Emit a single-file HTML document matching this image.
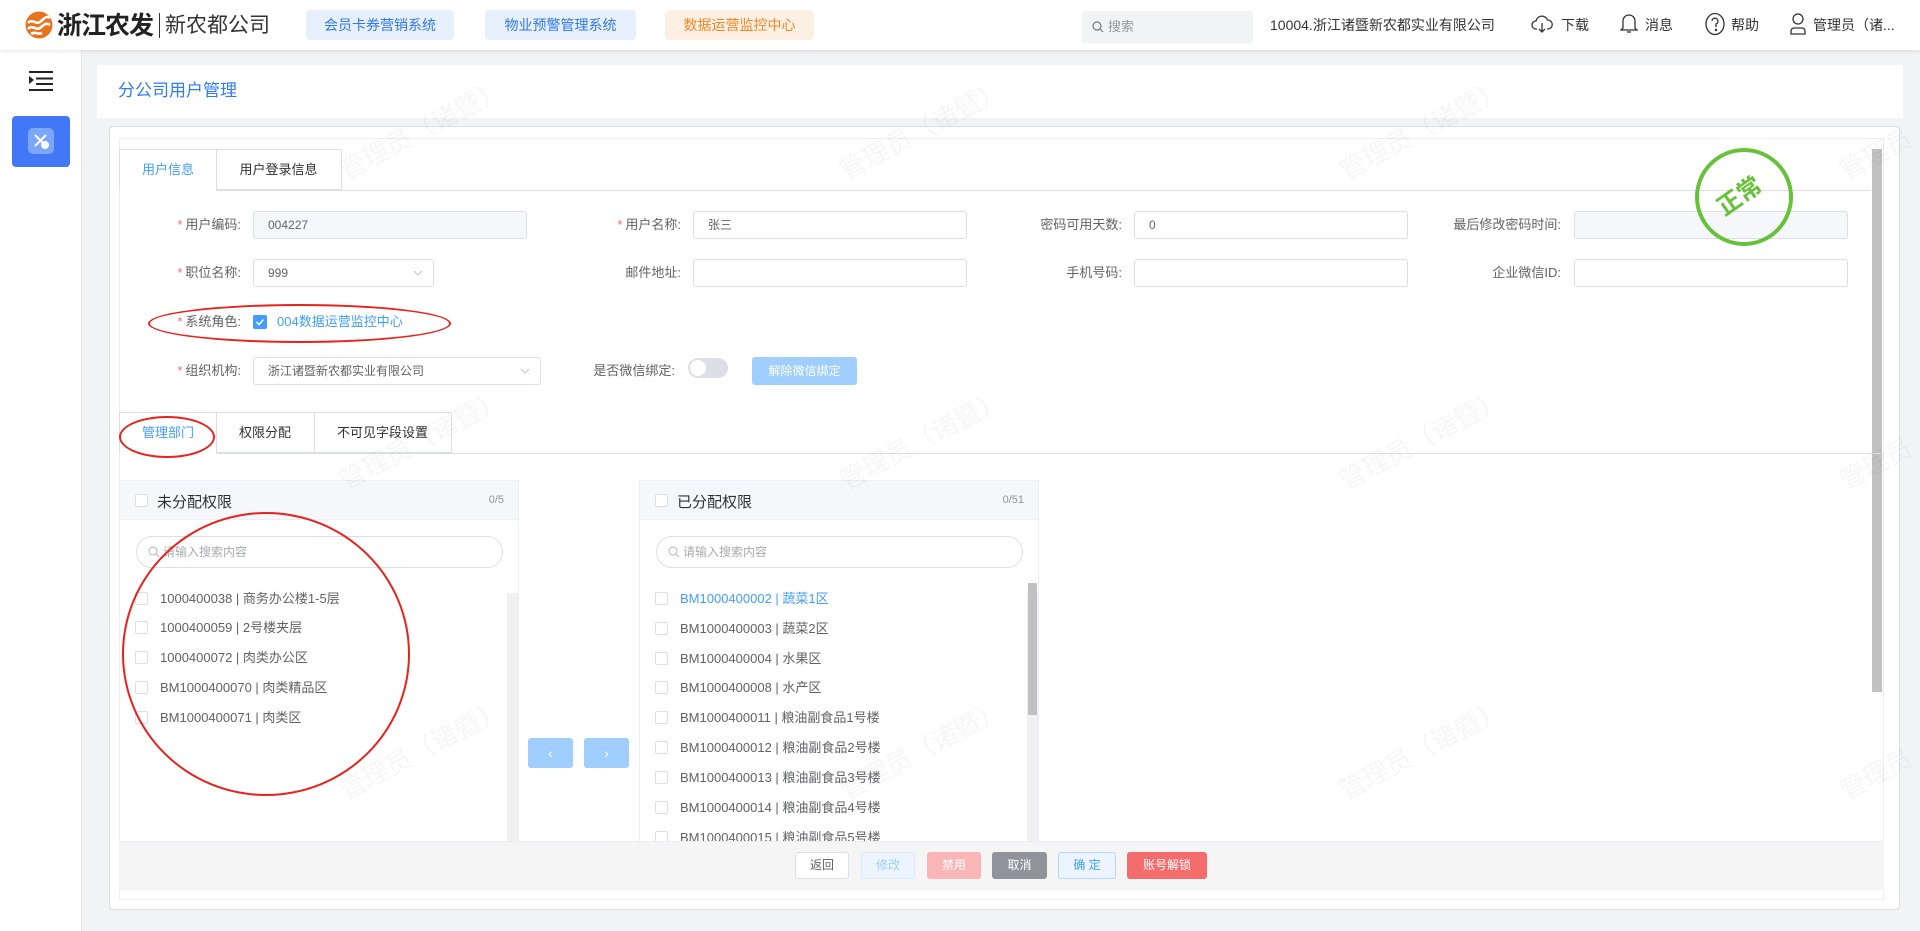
<!DOCTYPE html>
<html><head><meta charset="utf-8"><style>
*{box-sizing:border-box;margin:0;padding:0}
body{width:1920px;height:931px;overflow:hidden;background:#f2f3f5;font-family:"Liberation Sans","Noto Sans CJK SC",sans-serif;color:#606266;position:relative;font-size:13px}
.a{position:absolute}
.hdr{left:0;top:0;width:1920px;height:50px;background:#fff;box-shadow:0 2px 4px rgba(0,0,0,.08);z-index:5}
.tab{height:30px;top:10px;border-radius:4px;font-size:14px;line-height:30px;text-align:center}
.side{left:0;top:50px;width:82px;height:881px;background:#fff;border-right:1px solid #e6e6e6}
.inp{height:28px;border:1px solid #dcdfe6;border-radius:3px;background:#fff;font-size:12px;line-height:26px;padding-left:14px;color:#606266}
.lbl{font-size:13px;color:#606266;text-align:right;line-height:28px}
.req{color:#f56c6c;margin-right:3px}
.cb{width:13px;height:13px;border:1px solid #dcdfe6;border-radius:2px;background:#fff}
.item{font-size:13px;color:#606266;line-height:16px}
.wm{font-size:26px;color:rgba(0,0,0,.035);transform:rotate(-28deg);white-space:nowrap;z-index:3;pointer-events:none}
.btn{top:852px;height:27px;border-radius:3px;font-size:12px;line-height:25px;text-align:center}
</style></head><body>
<div class="a hdr">
 <svg class="a" style="left:25px;top:11px" width="28" height="28" viewBox="0 0 28 28"><circle cx="14" cy="14" r="13.5" fill="#e8731e"/><path d="M3 12c4-5 8 2 12-1s6-7 10-4M3 18c4-5 8 2 12-1s6-6 10-3M6 23c4-3 7 1 11-1" stroke="#fff" stroke-width="2.6" fill="none"/></svg>
 <div class="a" style="left:57px;top:10px;font-size:25px;font-weight:bold;color:#222;line-height:32px;letter-spacing:-1px">浙江农发</div>
 <div class="a" style="left:159px;top:13px;width:1px;height:25px;background:#333"></div>
 <div class="a" style="left:165px;top:12px;font-size:21px;color:#333;line-height:28px">新农都公司</div>
 <div class="a tab" style="left:306px;width:148px;background:#e5f0fc;color:#3477e6">会员卡券营销系统</div>
 <div class="a tab" style="left:485px;width:151px;background:#e5f0fc;color:#3477e6">物业预警管理系统</div>
 <div class="a tab" style="left:665px;width:149px;background:#fdf0e3;color:#f0882a">数据运营监控中心</div>
 <div class="a" style="left:1082px;top:11px;width:171px;height:32px;background:#f2f3f5;border-radius:3px;font-size:13px;color:#999;line-height:32px;padding-left:26px">搜索
  <svg class="a" style="left:10px;top:10px" width="12" height="12" viewBox="0 0 12 12"><circle cx="5" cy="5" r="4" stroke="#777" fill="none" stroke-width="1.2"/><path d="M8 8l3 3" stroke="#777" stroke-width="1.2"/></svg></div>
 <div class="a" style="left:1270px;top:16px;font-size:14px;color:#333;line-height:18px">10004.浙江诸暨新农都实业有限公司</div>
 <svg class="a" style="left:1531px;top:13px" width="22" height="22" viewBox="0 0 22 22" fill="none" stroke="#333" stroke-width="1.3"><path d="M6 16H5a4 4 0 0 1 0-8 6 6 0 0 1 11.5-1A4.5 4.5 0 0 1 17 16h-1"/><path d="M11 10v9M8 16l3 3 3-3"/></svg>
 <div class="a" style="left:1561px;top:15px;font-size:14px;color:#333">下载</div>
 <svg class="a" style="left:1620px;top:12px" width="18" height="22" viewBox="0 0 18 22" fill="none" stroke="#333" stroke-width="1.3"><path d="M3 16V9a6 6 0 0 1 12 0v7l2 2H1z"/><path d="M7 20h4"/></svg>
 <div class="a" style="left:1645px;top:15px;font-size:14px;color:#333">消息</div>
 <svg class="a" style="left:1704px;top:12px" width="22" height="24" viewBox="0 0 22 24" fill="none" stroke="#333" stroke-width="1.3"><ellipse cx="11" cy="12" rx="9" ry="10.5"/><path d="M8 9a3 3 0 1 1 4 3v3"/><circle cx="12" cy="18" r=".6" fill="#333"/></svg>
 <div class="a" style="left:1731px;top:15px;font-size:14px;color:#333">帮助</div>
 <svg class="a" style="left:1789px;top:12px" width="18" height="24" viewBox="0 0 18 24" fill="none" stroke="#333" stroke-width="1.3"><circle cx="9" cy="7" r="5"/><path d="M2 22v-3a3 3 0 0 1 3-3h8a3 3 0 0 1 3 3v3z"/></svg>
 <div class="a" style="left:1813px;top:15px;font-size:14px;color:#333">管理员（诸...</div>
</div>
<div class="a side">
 <svg class="a" style="left:29px;top:21px" width="24" height="20" viewBox="0 0 24 20"><path d="M0 1h24M7 7.5h17M7 13h17M0 19h24" stroke="#222" stroke-width="2"/><path d="M0 5l5 4-5 4z" fill="#222"/></svg>
 <div class="a" style="left:12px;top:66px;width:58px;height:51px;background:#4277f8;border-radius:4px"></div>
 <div class="a" style="left:28px;top:78px;width:26px;height:26px;background:#7aa6fb;border-radius:5px"></div>
 <svg class="a" style="left:31px;top:81px" width="20" height="20" viewBox="0 0 20 20" fill="none" stroke="#fff" stroke-width="2"><path d="M4 4l11 11M15 4L4 15"/><circle cx="14" cy="14" r="3" fill="#fff"/></svg>
</div>
<div class="a" style="left:97px;top:65px;width:1806px;height:53px;background:#fff"></div>
<div class="a" style="left:118px;top:80px;font-size:17px;color:#2f7cf5;line-height:22px">分公司用户管理</div>
<div class="a" style="left:109px;top:126px;width:1791px;height:784px;background:#fff;border:1px solid #dcdfe6;border-radius:4px"></div>
<div class="a" style="left:119px;top:138px;width:1765px;height:762px;border:1px solid #ebeef5;background:#fff"></div>
<div class="a" style="left:119px;top:149px;width:1752px;height:42px;border-bottom:1px solid #dcdfe6"></div>
<div class="a" style="left:119px;top:149px;width:98px;height:42px;border:1px solid #dcdfe6;border-bottom:1px solid #fff;background:#fff;color:#409eff;font-size:13px;line-height:40px;text-align:center">用户信息</div>
<div class="a" style="left:216px;top:149px;width:126px;height:41px;border:1px solid #dcdfe6;border-left:none;color:#303133;font-size:13px;line-height:40px;text-align:center">用户登录信息</div>
<div class="a" style="left:1872px;top:149px;width:10px;height:543px;background:#c1c1c1"></div>
<div class="a lbl" style="left:140px;top:211px;width:101px"><span class="req">*</span>用户编码:</div>
<div class="a inp" style="left:253px;top:211px;width:274px;background:#f5f7fa">004227</div>
<div class="a lbl" style="left:580px;top:211px;width:101px"><span class="req">*</span>用户名称:</div>
<div class="a inp" style="left:693px;top:211px;width:274px">张三</div>
<div class="a lbl" style="left:1000px;top:211px;width:122px">密码可用天数:</div>
<div class="a inp" style="left:1134px;top:211px;width:274px">0</div>
<div class="a lbl" style="left:1420px;top:211px;width:141px">最后修改密码时间:</div>
<div class="a inp" style="left:1574px;top:211px;width:274px;background:#f5f7fa"></div>
<div class="a lbl" style="left:140px;top:259px;width:101px"><span class="req">*</span>职位名称:</div>
<div class="a inp" style="left:253px;top:259px;width:181px">999<svg class="a" style="right:10px;top:10px" width="10" height="6"><path d="M1 1l4 4 4-4" stroke="#c0c4cc" fill="none"/></svg></div>
<div class="a lbl" style="left:580px;top:259px;width:101px">邮件地址:</div>
<div class="a inp" style="left:693px;top:259px;width:274px"></div>
<div class="a lbl" style="left:1000px;top:259px;width:122px">手机号码:</div>
<div class="a inp" style="left:1134px;top:259px;width:274px"></div>
<div class="a lbl" style="left:1420px;top:259px;width:141px">企业微信ID:</div>
<div class="a inp" style="left:1574px;top:259px;width:274px"></div>
<div class="a lbl" style="left:140px;top:308px;width:101px"><span class="req">*</span>系统角色:</div>
<div class="a" style="left:253px;top:315px;width:14px;height:14px;background:#409eff;border-radius:2px"><svg width="14" height="14"><path d="M3.5 7l2.5 2.5 4.5-5" stroke="#fff" stroke-width="1.5" fill="none"/></svg></div>
<div class="a" style="left:277px;top:313px;font-size:13px;color:#409eff;line-height:18px">004数据运营监控中心</div>
<div class="a" style="left:148px;top:304px;width:303px;height:39px;border:2px solid #e8221c;border-radius:50%"></div>
<div class="a lbl" style="left:140px;top:357px;width:101px"><span class="req">*</span>组织机构:</div>
<div class="a inp" style="left:253px;top:357px;width:288px">浙江诸暨新农都实业有限公司<svg class="a" style="right:10px;top:10px" width="10" height="6"><path d="M1 1l4 4 4-4" stroke="#c0c4cc" fill="none"/></svg></div>
<div class="a lbl" style="left:560px;top:357px;width:115px">是否微信绑定:</div>
<div class="a" style="left:688px;top:358px;width:40px;height:20px;border-radius:10px;background:#dcdfe6"><div class="a" style="left:2px;top:2px;width:16px;height:16px;border-radius:50%;background:#fff"></div></div>
<div class="a" style="left:752px;top:357px;width:105px;height:28px;background:#a0cfff;border-radius:3px;color:#fff;font-size:12px;line-height:28px;text-align:center">解除微信绑定</div>
<div class="a" style="left:119px;top:412px;width:1765px;height:42px;border-bottom:1px solid #dcdfe6"></div>
<div class="a" style="left:119px;top:412px;width:98px;height:42px;border:1px solid #dcdfe6;border-bottom:1px solid #fff;background:#fff;color:#409eff;font-size:13px;line-height:40px;text-align:center">管理部门</div>
<div class="a" style="left:216px;top:412px;width:99px;height:41px;border:1px solid #dcdfe6;border-left:none;color:#303133;font-size:13px;line-height:40px;text-align:center">权限分配</div>
<div class="a" style="left:314px;top:412px;width:138px;height:41px;border:1px solid #dcdfe6;border-left:none;color:#303133;font-size:13px;line-height:40px;text-align:center">不可见字段设置</div>
<div class="a" style="left:119px;top:416px;width:96px;height:42px;border:2px solid #e8221c;border-radius:50%"></div>
<div class="a" style="left:119px;top:480px;width:400px;height:362px;border:1px solid #ebeef5;background:#fff">
 <div class="a" style="left:0;top:0;width:398px;height:39px;background:#f5f7fa;border-bottom:1px solid #ebeef5"></div>
 <div class="a cb" style="left:15px;top:13px"></div>
 <div class="a" style="left:37px;top:10px;font-size:15px;color:#303133">未分配权限</div>
 <div class="a" style="right:14px;top:13px;font-size:11px;color:#909399">0/5</div>
 <div class="a" style="left:16px;top:55px;width:367px;height:32px;border:1px solid #dcdfe6;border-radius:16px;font-size:12px;color:#a8abb2;line-height:30px;padding-left:26px">请输入搜索内容<svg class="a" style="left:11px;top:9px" width="12" height="12"><circle cx="5" cy="5" r="4" stroke="#b0b3b8" fill="none"/><path d="M8 8l3 3" stroke="#b0b3b8"/></svg></div>
 <div class="a" style="left:387px;top:112px;width:11px;height:250px;background:#f1f1f1"></div>
 <div class="a cb" style="left:15px;top:111px"></div><div class="a item" style="left:40px;top:110px">1000400038 | 商务办公楼1-5层</div>
 <div class="a cb" style="left:15px;top:140px"></div><div class="a item" style="left:40px;top:139px">1000400059 | 2号楼夹层</div>
 <div class="a cb" style="left:15px;top:170px"></div><div class="a item" style="left:40px;top:169px">1000400072 | 肉类办公区</div>
 <div class="a cb" style="left:15px;top:200px"></div><div class="a item" style="left:40px;top:199px">BM1000400070 | 肉类精品区</div>
 <div class="a cb" style="left:15px;top:230px"></div><div class="a item" style="left:40px;top:229px">BM1000400071 | 肉类区</div>
</div>
<div class="a" style="left:122px;top:512px;width:288px;height:284px;border:2px solid #e8221c;border-radius:50%"></div>
<div class="a" style="left:528px;top:738px;width:45px;height:30px;background:#a0cfff;border-radius:3px;color:#fff;text-align:center;line-height:30px;font-size:14px">‹</div>
<div class="a" style="left:584px;top:738px;width:45px;height:30px;background:#a0cfff;border-radius:3px;color:#fff;text-align:center;line-height:30px;font-size:14px">›</div>
<div class="a" style="left:639px;top:480px;width:400px;height:362px;border:1px solid #ebeef5;background:#fff;overflow:hidden">
 <div class="a" style="left:0;top:0;width:398px;height:39px;background:#f5f7fa;border-bottom:1px solid #ebeef5"></div>
 <div class="a cb" style="left:15px;top:13px"></div>
 <div class="a" style="left:37px;top:10px;font-size:15px;color:#303133">已分配权限</div>
 <div class="a" style="right:14px;top:13px;font-size:11px;color:#909399">0/51</div>
 <div class="a" style="left:16px;top:55px;width:367px;height:32px;border:1px solid #dcdfe6;border-radius:16px;font-size:12px;color:#a8abb2;line-height:30px;padding-left:26px">请输入搜索内容<svg class="a" style="left:11px;top:9px" width="12" height="12"><circle cx="5" cy="5" r="4" stroke="#b0b3b8" fill="none"/><path d="M8 8l3 3" stroke="#b0b3b8"/></svg></div>
 <div class="a" style="left:387px;top:112px;width:11px;height:250px;background:#f1f1f1"></div>
 <div class="a" style="left:388px;top:102px;width:9px;height:132px;background:#c1c1c1"></div>
 <div class="a cb" style="left:15px;top:111px"></div><div class="a item" style="left:40px;top:110px;color:#409eff">BM1000400002 | 蔬菜1区</div>
 <div class="a cb" style="left:15px;top:141px"></div><div class="a item" style="left:40px;top:140px">BM1000400003 | 蔬菜2区</div>
 <div class="a cb" style="left:15px;top:171px"></div><div class="a item" style="left:40px;top:170px">BM1000400004 | 水果区</div>
 <div class="a cb" style="left:15px;top:200px"></div><div class="a item" style="left:40px;top:199px">BM1000400008 | 水产区</div>
 <div class="a cb" style="left:15px;top:230px"></div><div class="a item" style="left:40px;top:229px">BM1000400011 | 粮油副食品1号楼</div>
 <div class="a cb" style="left:15px;top:260px"></div><div class="a item" style="left:40px;top:259px">BM1000400012 | 粮油副食品2号楼</div>
 <div class="a cb" style="left:15px;top:290px"></div><div class="a item" style="left:40px;top:289px">BM1000400013 | 粮油副食品3号楼</div>
 <div class="a cb" style="left:15px;top:320px"></div><div class="a item" style="left:40px;top:319px">BM1000400014 | 粮油副食品4号楼</div>
 <div class="a cb" style="left:15px;top:350px"></div><div class="a item" style="left:40px;top:349px">BM1000400015 | 粮油副食品5号楼</div>
</div>
<div class="a" style="left:119px;top:841px;width:1765px;height:49px;background:#f5f5f5;border-top:1px solid #ebeef5"></div>
<div class="a btn" style="left:795px;width:54px;background:#fff;border:1px solid #dcdfe6;color:#606266">返回</div>
<div class="a btn" style="left:861px;width:54px;background:#ecf5ff;border:1px solid #d9ecff;color:#a0cfff">修改</div>
<div class="a btn" style="left:927px;width:54px;background:#fab6b6;border:1px solid #fab6b6;color:#fff">禁用</div>
<div class="a btn" style="left:992px;width:55px;background:#909399;border:1px solid #909399;color:#fff">取消</div>
<div class="a btn" style="left:1058px;width:58px;background:#ecf5ff;border:1px solid #b3d8ff;color:#409eff">确 定</div>
<div class="a btn" style="left:1127px;width:80px;background:#f56c6c;border:1px solid #f56c6c;color:#fff">账号解锁</div>
<div class="a" style="left:1695px;top:148px;width:98px;height:98px;border:4px solid #67c23a;border-radius:50%"></div>
<div class="a" style="left:1716px;top:183px;font-size:24px;font-weight:bold;color:#67c23a;transform:rotate(-35deg);line-height:28px">正常</div>
<div class="a wm" style="left:330px;top:110px">管理员（诸暨）</div>
<div class="a wm" style="left:830px;top:110px">管理员（诸暨）</div>
<div class="a wm" style="left:1330px;top:110px">管理员（诸暨）</div>
<div class="a wm" style="left:1830px;top:110px">管理员（诸暨）</div>
<div class="a wm" style="left:330px;top:420px">管理员（诸暨）</div>
<div class="a wm" style="left:830px;top:420px">管理员（诸暨）</div>
<div class="a wm" style="left:1330px;top:420px">管理员（诸暨）</div>
<div class="a wm" style="left:1830px;top:420px">管理员（诸暨）</div>
<div class="a wm" style="left:330px;top:730px">管理员（诸暨）</div>
<div class="a wm" style="left:830px;top:730px">管理员（诸暨）</div>
<div class="a wm" style="left:1330px;top:730px">管理员（诸暨）</div>
<div class="a wm" style="left:1830px;top:730px">管理员（诸暨）</div>
</body></html>
